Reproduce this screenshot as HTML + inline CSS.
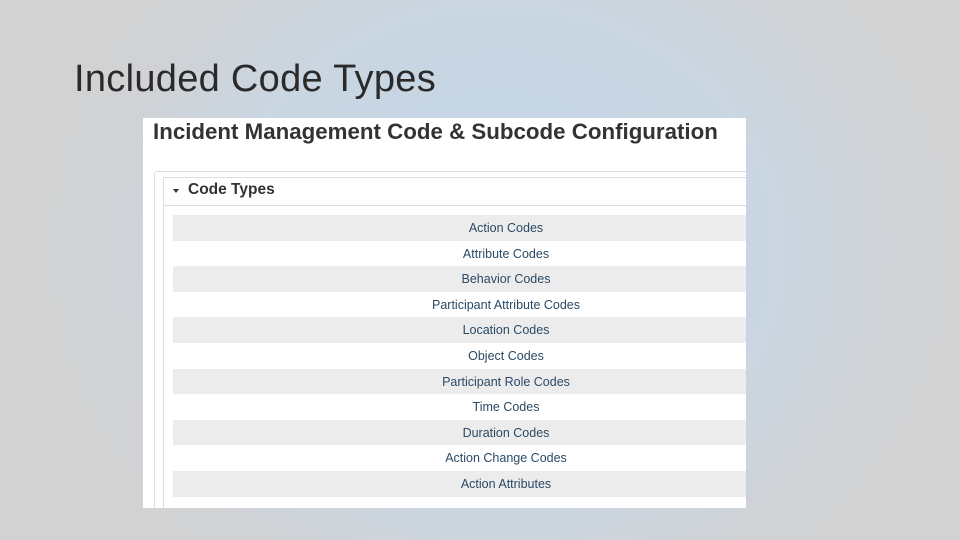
<!DOCTYPE html>
<html><head><style>
body{margin:0;width:960px;height:540px;overflow:hidden;font-family:"Liberation Sans",sans-serif;
background:radial-gradient(ellipse 480px 420px at 500px 250px,#c3d6e8 0%,#c9d6e2 55%,#d0d2d5 85%,#d2d2d2 100%);position:relative}
h1{position:absolute;left:74px;top:58px;margin:0;font-weight:normal;font-size:38px;color:#2a2a2a;letter-spacing:0.3px}
.shot{position:absolute;left:143px;top:118px;width:603px;height:390px;background:#fff;overflow:hidden}
.title{position:absolute;left:10px;top:1px;font-size:22.3px;font-weight:bold;color:#333;white-space:nowrap}
.outer{position:absolute;left:11px;top:53px;width:620px;height:340px;border:1px solid #ddd;border-radius:3px}
.inner{position:absolute;left:20px;top:59px;width:620px;height:330px;border:1px solid #ddd}
.hdr{position:absolute;left:21px;top:60px;width:620px;height:27px;border-bottom:1px solid #ddd;font-weight:bold;font-size:15.5px;color:#333}
.hdr span{position:absolute;left:24px;top:3px}
.hdr i{position:absolute;left:9px;top:11px;border-left:3px solid transparent;border-right:3px solid transparent;border-top:4px solid #333}
.rows{position:absolute;left:30px;top:97px;width:666px}
.rows div{height:25.6px;line-height:26.6px;text-align:center;font-size:12.5px;color:#2a4a66}
.rows div:nth-child(odd){background:#ececec}
</style></head><body>
<h1>Included Code Types</h1>
<div class="shot">
<div class="title">Incident Management Code &amp; Subcode Configuration</div>
<div class="outer"></div><div class="inner"></div>
<div class="hdr"><i></i><span>Code Types</span></div>
<div class="rows">
<div>Action Codes</div><div>Attribute Codes</div><div>Behavior Codes</div><div>Participant Attribute Codes</div><div>Location Codes</div><div>Object Codes</div><div>Participant Role Codes</div><div>Time Codes</div><div>Duration Codes</div><div>Action Change Codes</div><div>Action Attributes</div>
</div>
</div>
</body></html>
